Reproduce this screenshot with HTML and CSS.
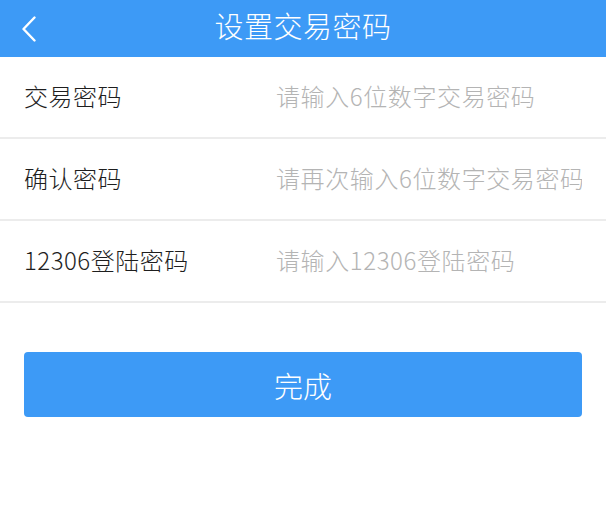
FILE: index.html
```html
<!doctype html>
<html lang="zh-CN">
    <head>
        <meta charset="UTF-8" />
        <meta name="viewport" content="width=device-width, initial-scale=1.0" />
        <title>设置交易密码</title>
        <link rel="stylesheet" href="styles.css">
    </head>
    <body>
        <header class="nav-bar">
            <a href="#" class="back-button" aria-label="返回">
                <svg class="back-icon" viewBox="0 0 14 26" xmlns="http://www.w3.org/2000/svg">
                    <path d="M12.5 1.5 1.5 13l11 11.5" />
                </svg>
            </a>
            <h1 class="nav-title">设置交易密码</h1>
        </header>

        <form class="password-form">
            <label class="form-row">
                <span class="form-label">交易密码</span>
                <input class="form-input" type="password" placeholder="请输入6位数字交易密码" />
            </label>
            <label class="form-row">
                <span class="form-label">确认密码</span>
                <input class="form-input" type="password" placeholder="请再次输入6位数字交易密码" />
            </label>
            <label class="form-row">
                <span class="form-label">12306登陆密码</span>
                <input class="form-input" type="password" placeholder="请输入12306登陆密码" />
            </label>

            <button type="submit" class="submit-button">完成</button>
        </form>
    </body>
</html>
```

FILE: styles.css
```css
/* Reset */
*,
*::before,
*::after {
    margin: 0;
    padding: 0;
    box-sizing: border-box;
}

:root {
    --primary-color: #3d9af6;
    --text-color: #1e1e1e;
    --placeholder-color: #b4b4b4;
    --line-color: #ececec;
}

body {
    font-family: "Noto Sans CJK SC", "Noto Sans", sans-serif;
    font-weight: 300;
    background: #fff;
    color: var(--text-color);
}

.nav-bar {
    height: 57px;
    background: var(--primary-color);
    display: grid;
    grid-template-columns: 57px 1fr 57px;
    align-items: center;
}

.back-button {
    display: flex;
    align-items: center;
    padding-left: 22px;
    height: 100%;
}

.back-icon {
    width: 14px;
    height: 26px;
    fill: none;
    stroke: #fff;
    stroke-width: 2.4;
    stroke-linecap: round;
    stroke-linejoin: round;
}

.nav-title {
    color: #fff;
    font-size: 29px;
    font-weight: 300;
    letter-spacing: 0.5px;
    text-align: center;
    line-height: 1;
    margin-top: -6px;
}

.form-row {
    display: grid;
    grid-template-columns: 252px 1fr;
    align-items: center;
    height: 82px;
    padding: 0 24px 4px;
    border-bottom: 2px solid var(--line-color);
}

.form-label {
    font-size: 24px;
    letter-spacing: 0.5px;
    color: var(--text-color);
}

.form-input {
    width: 100%;
    border: none;
    outline: none;
    background: none;
    font-family: inherit;
    font-weight: inherit;
    font-size: 24px;
    letter-spacing: 0.6px;
    color: var(--text-color);
}

.form-input::placeholder {
    color: var(--placeholder-color);
}

.submit-button {
    display: block;
    width: calc(100% - 48px);
    height: 65px;
    margin: 49px 24px 0;
    background: var(--primary-color);
    color: #fff;
    border: none;
    border-radius: 4px;
    font-family: inherit;
    font-weight: inherit;
    font-size: 29px;
    cursor: pointer;
}
```
